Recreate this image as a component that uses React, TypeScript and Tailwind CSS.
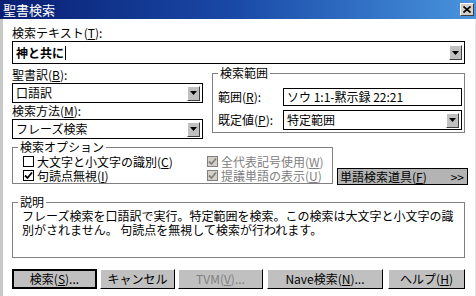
import React from "react";

const U = ({ c }: { c: string }) => <span className="underline">{c}</span>;

function ArrowBtn() {
  return (
    <div className="w-[13px] h-[15px] bg-[#c0c0c0] border border-t-white border-l-white border-b-[#404040] border-r-[#404040] flex items-center justify-center shrink-0">
      <svg width="7" height="4" viewBox="0 0 7 4">
        <path d="M0 0h7L3.5 4z" fill="black" />
      </svg>
    </div>
  );
}

function Select({ text, h = "h-[20px]" }: { text: React.ReactNode; h?: string }) {
  return (
    <div className={`${h} border border-black bg-white flex items-center pl-[3px] pr-[2px]`}>
      <div className="flex-1">{text}</div>
      <ArrowBtn />
    </div>
  );
}

function Check({ checked, disabled }: { checked: boolean; disabled?: boolean }) {
  return (
    <div
      className={`w-[11px] h-[11px] border ${disabled ? "border-[#808080] bg-[#d4d0c8]" : "border-black bg-white"} flex items-center justify-center shrink-0`}
    >
      {checked && (
        <svg width="9" height="9" viewBox="0 0 9 9">
          <path d="M1 4.5l2.5 2.5L8 1.5" stroke={disabled ? "#808080" : "black"} strokeWidth="1.8" fill="none" />
        </svg>
      )}
    </div>
  );
}

function Group({ title, className, children }: { title: string; className: string; children?: React.ReactNode }) {
  return (
    <div className={`relative border border-[#808080] ${className}`}>
      <div className="absolute -top-[7px] left-[5px] bg-white px-[2px] leading-[12px]">{title}</div>
      {children}
    </div>
  );
}

function Btn({ children, className, def, disabled }: { children: React.ReactNode; className: string; def?: boolean; disabled?: boolean }) {
  return (
    <div
      className={`h-[20px] bg-[#c0c0c0] ${def ? "border-2 border-black" : "border border-t-white border-l-white border-b-black border-r-black"} flex items-center justify-center ${disabled ? "text-[#808080]" : "text-black"} ${className}`}
    >
      {children}
    </div>
  );
}

export default function App() {
  return (
    <div
      className="w-[476px] h-[296px] bg-white overflow-hidden text-[12px] leading-[16px] text-black flex flex-col"
      style={{ fontFamily: '"Noto Sans CJK JP", "Noto Sans", sans-serif' }}
    >
      {/* title bar */}
      <div className="h-[19px] shrink-0 bg-gradient-to-r from-[#0a1f73] via-[#1a4aa8] to-[#4a94dd] flex items-center justify-between pl-[3px] pr-[2px]">
        <span className="text-white text-[13px] leading-[16px]">聖書検索</span>
        <div className="w-[14px] h-[13px] bg-[#d4d0c8] border border-t-white border-l-white border-b-[#404040] border-r-[#404040] flex items-center justify-center">
          <svg width="8" height="7" viewBox="0 0 8 7">
            <path d="M0.5 0.5L7.5 6.5M7.5 0.5L0.5 6.5" stroke="black" strokeWidth="1.6" />
          </svg>
        </div>
      </div>

      <div className="flex-1 flex border-l-[3px] border-l-[#c8c8c8]">
        <div className="flex-1 flex flex-col pl-[9px] pr-[10px]">
          <div className="mt-[6px]">
            検索テキスト(<U c="T" />):
          </div>
          <div className="h-[23px] border border-black flex items-center pl-[3px] pr-[2px]">
            <div className="flex-1 font-bold flex items-center">
              神と共に<span className="inline-block w-[1px] h-[14px] bg-black ml-[1px]" />
            </div>
            <ArrowBtn />
          </div>

          <div className="flex mt-[3px]">
            <div className="w-[191px] flex flex-col">
              <div>
                聖書訳(<U c="B" />):
              </div>
              <Select text="口語訳" />
              <div>
                検索方法(<U c="M" />):
              </div>
              <Select text="フレーズ検索" />
            </div>
            <Group title="検索範囲" className="ml-[9px] flex-1 mt-[6px] h-[60px] pl-[5px] pr-[2px]">
              <div className="flex items-center mt-[14px]">
                <div className="w-[65px]">
                  範囲(<U c="R" />):
                </div>
                <div className="flex-1 h-[18px] border border-black pl-[3px] flex items-center">ソウ 1:1-黙示録 22:21</div>
              </div>
              <div className="flex items-center mt-[4px]">
                <div className="w-[65px]">
                  既定値(<U c="P" />):
                </div>
                <div className="flex-1">
                  <Select text="特定範囲" />
                </div>
              </div>
            </Group>
          </div>

          <div className="flex items-end mt-[8px]">
            <Group title="検索オプション" className="w-[321px] h-[37px] pl-[10px] pt-[7px]">
              <div className="flex">
                <div className="w-[184px] flex gap-[3px]">
                  <div className="flex flex-col gap-[3px] pt-[1px]">
                    <Check checked={false} />
                    <Check checked={true} />
                  </div>
                  <div className="leading-[14px]">
                    大文字と小文字の識別(<U c="C" />)
                    <br />
                    句読点無視(<U c="I" />)
                  </div>
                </div>
                <div className="flex gap-[3px] text-[#808080]">
                  <div className="flex flex-col gap-[3px] pt-[1px]">
                    <Check checked={true} disabled />
                    <Check checked={true} disabled />
                  </div>
                  <div className="leading-[14px]">
                    全代表記号使用(<U c="W" />)
                    <br />
                    提議単語の表示(<U c="U" />)
                  </div>
                </div>
              </div>
            </Group>
            <div className="ml-[4px] mb-[-1px] h-[17px] flex-1 mr-[-3px] bg-[#b4b4b4] border border-black flex items-center justify-between pl-[2px] pr-[3px]">
              <span>
                単語検索道具(<U c="F" />)
              </span>
              <span>&gt;&gt;</span>
            </div>
          </div>

          <Group title="説明" className="mt-[18px] h-[56px] pl-[9px] pt-[6px]">
            <div className="leading-[14px]">
              フレーズ検索を口語訳で実行。特定範囲を検索。この検索は大文字と小文字の識
              <br />
              別がされません。 句読点を無視して検索が行われます。
            </div>
          </Group>

          <div className="flex mt-[11px]">
            <Btn def className="w-[85px]">
              検索(<U c="S" />)...
            </Btn>
            <Btn className="ml-[3px] w-[75px]">キャンセル</Btn>
            <Btn disabled className="ml-[3px] w-[85px]">
              TVM(<U c="V" />)...
            </Btn>
            <Btn className="ml-[4px] w-[116px]">
              Nave検索(<U c="N" />)...
            </Btn>
            <Btn className="ml-[5px] w-[77px]">
              ヘルプ(<U c="H" />)
            </Btn>
          </div>
        </div>
        <div className="w-[1px] bg-black" />
        <div className="w-[2px] bg-[#e8e8e8]" />
      </div>
    </div>
  );
}
